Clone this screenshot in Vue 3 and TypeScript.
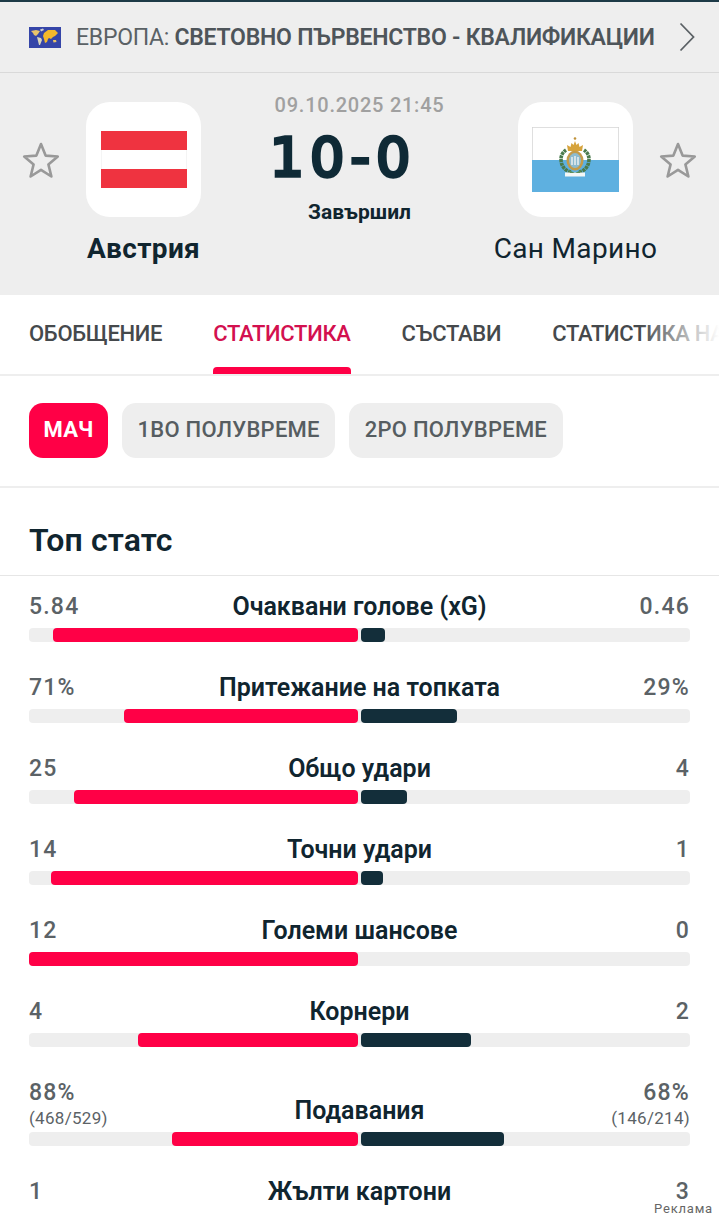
<script setup lang="ts">
interface Stat {
  name: string
  home: string
  away: string
  homeSub?: string
  awaySub?: string
  homeBar: number
  awayBar: number
}

const tabs = ['ОБОБЩЕНИЕ', 'СТАТИСТИКА', 'СЪСТАВИ', 'СТАТИСТИКА НА ИГРАЧИТЕ']
const periods = ['МАЧ', '1ВО ПОЛУВРЕМЕ', '2РО ПОЛУВРЕМЕ']

const stats: Stat[] = [
  { name: 'Очаквани голове (xG)', home: '5.84', away: '0.46', homeBar: 305, awayBar: 24 },
  { name: 'Притежание на топката', home: '71%', away: '29%', homeBar: 234, awayBar: 96 },
  { name: 'Общо удари', home: '25', away: '4', homeBar: 284, awayBar: 46 },
  { name: 'Точни удари', home: '14', away: '1', homeBar: 307, awayBar: 22 },
  { name: 'Големи шансове', home: '12', away: '0', homeBar: 329, awayBar: 0 },
  { name: 'Корнери', home: '4', away: '2', homeBar: 220, awayBar: 110 },
  { name: 'Подавания', home: '88%', away: '68%', homeSub: '(468/529)', awaySub: '(146/214)', homeBar: 186, awayBar: 143 },
  { name: 'Жълти картони', home: '1', away: '3', homeBar: 82, awayBar: 247 }
]
const half = 329
const pct = (v: number) => `${(v / half) * 100}%`
</script>

<template>
  <div class="page">
    <div class="top-line"></div>
    <header class="league">
      <svg class="world" viewBox="0 0 32 21">
        <rect width="32" height="21" fill="#3545a8" />
        <path d="M2 4l5-1 4 1-2 3-2 2-2-1-1-2z" fill="#e9c46a" />
        <path d="M8 10l4 1 1 2-2 5-1 0-1-4z" fill="#d8d4bd" />
        <path d="M11 2.500l3-1 1 1.500-3 1.500z" fill="#cfd0cf" />
        <path d="M15 6l4-3 7 0 3 3-3 3-2 1-2 2-2-1-1 1-1 3-2 1-1-4-1-3z" fill="#f4b82b" />
        <path d="M24 13l3 0 .5 2-3 .5z" fill="#e9c46a" />
      </svg>
      <div class="league-name">ЕВРОПА: <b>СВЕТОВНО ПЪРВЕНСТВО - КВАЛИФИКАЦИИ</b></div>
      <svg class="chevron" viewBox="0 0 16 30">
        <path d="M1.500 1.500L14.500 15L1.500 28.500" fill="none" stroke="#5b6165" stroke-width="1.800" />
      </svg>
    </header>

    <section class="match">
      <svg class="star" viewBox="0 0 38 38">
        <path d="M19 3l4.600 11.600 12.200.9-9.400 7.900 3 12.100L19 28.900 8.600 35.500l3-12.100-9.400-7.900 12.200-.9z" fill="none" stroke="#999" stroke-width="2.600" stroke-linejoin="round" />
      </svg>
      <div class="team">
        <div class="logo">
          <svg class="flag-at" viewBox="0 0 86 57">
            <rect width="86" height="57" fill="#fff" />
            <rect width="86" height="19" fill="#ef3340" />
            <rect y="38" width="86" height="19" fill="#ef3340" />
            <path d="M85.750 19v19M.25 19v19" stroke="#e2e2e2" stroke-width=".5" />
          </svg>
        </div>
        <div class="team-name win">Австрия</div>
      </div>
      <div class="center">
        <div class="date">09.10.2025 21:45</div>
        <div class="score">10-0</div>
        <div class="status">Завършил</div>
      </div>
      <div class="team">
        <div class="logo">
          <svg class="flag-sm" viewBox="0 0 87 65">
            <rect width="87" height="33" fill="#fff" />
            <rect y="33" width="87" height="32" fill="#5eb0e0" />
            <path d="M.25 33V.25h86.500V33" fill="none" stroke="#b8b8b8" stroke-width=".6" />
            <path d="M39 45c-6-1-10-6-10-13 0-4 2-7 5-9M47 45c6-1 10-6 10-13 0-4-2-7-5-9" fill="none" stroke="#4a7a4c" stroke-width="3.600" stroke-dasharray="3 .7" />
            <path d="M36 24l-1-6 3.500 2 1-4 2 2 1.500-4 1.500 4 2-2 1 4 3.500-2-1 6z" fill="#d6a33c" />
            <circle cx="43" cy="11.500" r="1.300" fill="#c0923a" />
            <ellipse cx="43" cy="33.500" rx="8.500" ry="10" fill="#c49b4a" />
            <ellipse cx="43" cy="33.500" rx="6" ry="7.500" fill="#8dbbd0" />
            <path d="M40 30v8M43 29v9M46 30v8" stroke="#f2f2f2" stroke-width="1.400" />
            <path d="M33 45.500h20v4H33z" fill="#f4f7f7" />
            <path d="M37 43l6 3 6-3-1 3h-10z" fill="#5a8f5d" />
          </svg>
        </div>
        <div class="team-name">Сан Марино</div>
      </div>
      <svg class="star" viewBox="0 0 38 38">
        <path d="M19 3l4.600 11.600 12.200.9-9.400 7.900 3 12.100L19 28.900 8.600 35.500l3-12.100-9.400-7.900 12.200-.9z" fill="none" stroke="#999" stroke-width="2.600" stroke-linejoin="round" />
      </svg>
    </section>

    <nav class="tabs">
      <div v-for="(t, i) in tabs" :key="t" class="tab" :class="{ active: i === 1 }">{{ t }}</div>
      <div class="fade"></div>
    </nav>

    <div class="periods">
      <div v-for="(p, i) in periods" :key="p" class="period" :class="{ on: i === 0 }">{{ p }}</div>
    </div>

    <h2 class="title">Топ статс</h2>

    <div class="stats">
      <div v-for="s in stats" :key="s.name" class="stat">
        <div class="head">
          <div class="val">
            <div>{{ s.home }}</div>
            <div v-if="s.homeSub" class="sub">{{ s.homeSub }}</div>
          </div>
          <div class="stat-name">{{ s.name }}</div>
          <div class="val right">
            <div>{{ s.away }}</div>
            <div v-if="s.awaySub" class="sub">{{ s.awaySub }}</div>
          </div>
        </div>
        <div class="track">
          <div class="half left"><div class="fill red" :style="{ width: pct(s.homeBar) }"></div></div>
          <div class="half"><div class="fill dark" :style="{ width: pct(s.awayBar) }"></div></div>
        </div>
      </div>
    </div>

    <div class="ad">Реклама</div>
  </div>
</template>

<style>
html, body { margin: 0; background: #fff; }
</style>

<style scoped>
.page {
  position: relative;
  width: 719px;
  height: 1213px;
  overflow: hidden;
  background: #fff;
  font-family: Roboto, "Noto Sans", sans-serif;
  color: #10252f;
}
.top-line { height: 2px; background: #1d3a47; }
.league {
  height: 71px;
  box-sizing: border-box;
  display: flex;
  align-items: center;
  padding: 0 24px 0 29px;
  background: #eeeeee;
  border-bottom: 1px solid #d9d9d9;
}
.world { width: 32px; height: 21px; flex: none; }
.league-name {
  flex: 1;
  margin-left: 15px;
  font-size: 23px;
  letter-spacing: -.25px;
  color: #5a6165;
  white-space: nowrap;
}
.league-name b { font-weight: 600; color: #4e555a; }
.chevron { width: 16px; height: 30px; flex: none; }

.match {
  height: 222px;
  background: #eeeeee;
  display: grid;
  grid-template-columns: 38.5px 166px 1fr 166px 38.5px;
  padding: 0 22px;
  box-sizing: border-box;
}
.star { width: 38px; height: 38px; margin-top: 68px; }
.team { display: flex; flex-direction: column; align-items: center; padding-top: 29px; }
.logo {
  width: 115px;
  height: 115px;
  border-radius: 24px;
  background: #fff;
  display: flex;
  align-items: center;
  justify-content: center;
}
.flag-at { width: 86px; height: 57px; }
.flag-sm { width: 87px; height: 65px; }
.team-name { margin-top: 15px; font-size: 28px; line-height: 34px; white-space: nowrap; color: #10252f; letter-spacing: .35px; }
.team-name.win { font-weight: 700; }
.center { display: flex; flex-direction: column; align-items: center; }
.date { margin-top: 20px; font-size: 20px; line-height: 24px; font-weight: 500; letter-spacing: .75px; color: #a0a0a0; }
.score {
  margin: 7px 33px 0 0;
  font-family: "DejaVu Sans", sans-serif;
  font-weight: 400;
  font-size: 54px;
  line-height: 68px;
  letter-spacing: 6px;
  color: #0f2a36;
  -webkit-text-stroke: 3.500px #0f2a36;
}
.status { margin-top: 8px; font-size: 21px; line-height: 24px; font-weight: 700; color: #10252f; }

.tabs {
  position: relative;
  height: 81px;
  box-sizing: border-box;
  display: flex;
  gap: 51px;
  padding-left: 29px;
  overflow: hidden;
  border-bottom: 2px solid #eeeeee;
}
.tab {
  position: relative;
  flex: none;
  height: 79px;
  line-height: 78px;
  font-size: 22px;
  font-weight: 500;
  letter-spacing: -.3px;
  color: #45494c;
  white-space: nowrap;
}
.tab.active { color: #d3104f; }
.tab.active::after {
  content: "";
  position: absolute;
  left: 0;
  right: 0;
  bottom: 0;
  height: 7px;
  border-radius: 4px 4px 0 0;
  background: #ff0046;
}
.fade {
  position: absolute;
  top: 0;
  right: 0;
  width: 80px;
  height: 78px;
  background: linear-gradient(to right, rgba(255, 255, 255, 0), #fff);
}
.periods {
  height: 112px;
  box-sizing: border-box;
  display: flex;
  gap: 14px;
  padding: 27px 29px 0;
  border-bottom: 2px solid #eeeeee;
}
.period {
  height: 55px;
  line-height: 54px;
  padding: 0 15.5px;
  border-radius: 14px;
  background: #eeeeee;
  font-size: 22px;
  font-weight: 500;
  letter-spacing: .25px;
  color: #565d61;
}
.period.on { padding: 0 14.5px; background: #ff0046; color: #fff; font-weight: 700; letter-spacing: .38px; }
.title {
  margin: 0;
  height: 88px;
  box-sizing: border-box;
  padding: 32px 29px 0;
  font-size: 32px;
  line-height: 40px;
  font-weight: 600;
  letter-spacing: .1px;
  color: #10252f;
  border-bottom: 1px solid #e6e6e6;
}
.stats { padding: 16px 29px 0; }
.stat { margin-bottom: 31px; }
.head {
  display: grid;
  grid-template-columns: 120px 1fr 120px;
  align-items: center;
  margin-bottom: 7px;
}
.val { font-size: 23px; line-height: 29px; letter-spacing: 1.2px; color: #5b6266; font-weight: 500; }
.val.right { text-align: right; }
.sub { font-size: 17px; line-height: 18px; letter-spacing: .3px; font-weight: 400; margin: 2px 0 -2px; }
.stat-name { align-self: end; text-align: center; font-size: 25px; line-height: 29px; font-weight: 600; white-space: nowrap; color: #10252f; }
.track {
  height: 14px;
  display: flex;
  gap: 3px;
  border-radius: 4px;
  background: #eeeeee;
}
.half { flex: 1; display: flex; }
.half.left { justify-content: flex-end; }
.fill { height: 14px; border-radius: 4px; }
.red { background: #ff0046; }
.dark { background: #132e3a; }
.ad {
  position: absolute;
  right: 6px;
  top: 1202px;
  font-size: 13px;
  line-height: 14px;
  letter-spacing: .8px;
  color: #666;
  padding-left: 1px;
}
</style>
